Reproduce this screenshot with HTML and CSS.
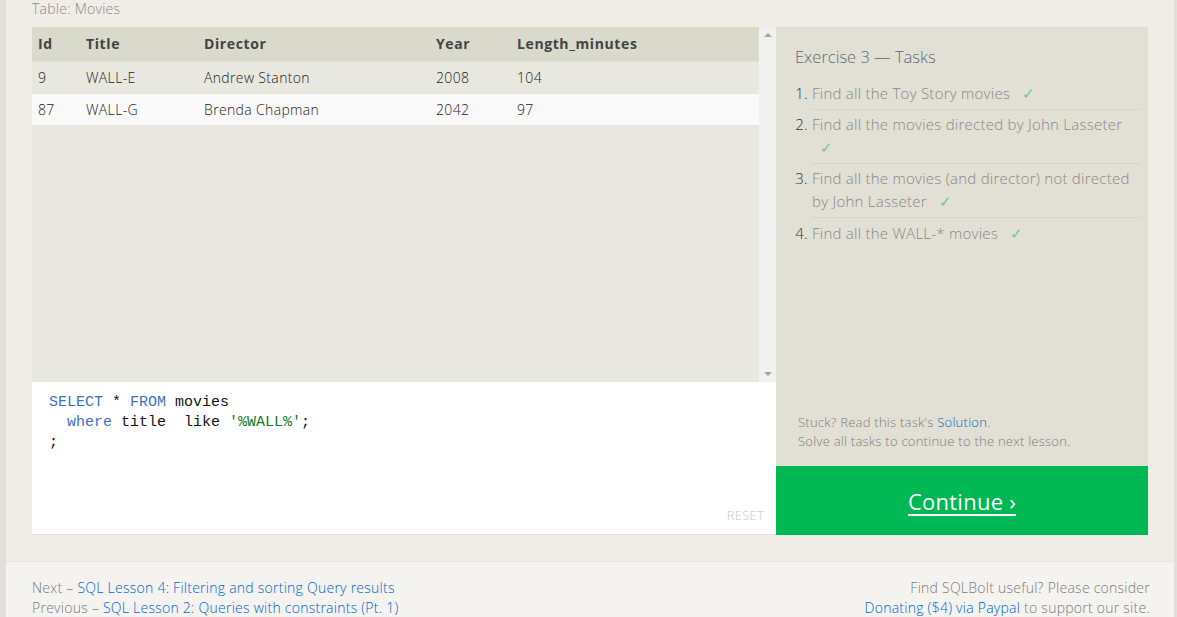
FILE: index.html
```html
<!DOCTYPE html>
<html>
<head>
<meta charset="utf-8">
<link rel="stylesheet" href="styles.css">
</head>
<body>
<div class="page">
  <section class="lesson">
    <div class="table-label">Table: Movies</div>
    <div class="exercise">
      <div class="left">
        <div class="table-box">
          <div class="table-scroll">
            <table class="results">
              <thead>
                <tr><th class="c-id">Id</th><th class="c-title">Title</th><th class="c-dir">Director</th><th class="c-year">Year</th><th>Length_minutes</th></tr>
              </thead>
              <tbody>
                <tr><td>9</td><td>WALL-E</td><td>Andrew Stanton</td><td>2008</td><td>104</td></tr>
                <tr class="alt"><td>87</td><td>WALL-G</td><td>Brenda Chapman</td><td>2042</td><td>97</td></tr>
              </tbody>
            </table>
          </div>
          <div class="scrollbar">
            <span class="arrow up"></span>
            <span class="arrow down"></span>
          </div>
        </div>
        <div class="editor">
          <div class="code">
            <div class="line"><span class="kw">SELECT</span> * <span class="kw">FROM</span> movies</div>
            <div class="line">  <span class="kw">where</span> title  like <span class="str">'%WALL%'</span>;</div>
            <div class="line">;</div>
          </div>
          <div class="reset">RESET</div>
        </div>
      </div>
      <div class="right">
        <div class="tasks">
          <h3 class="tasks-title">Exercise 3 — Tasks</h3>
          <ol class="task-list">
            <li>Find all the Toy Story movies <span class="check">✓</span></li>
            <li>Find all the movies directed by John Lasseter <span class="check">✓</span></li>
            <li>Find all the movies (and director) not directed by John Lasseter <span class="check">✓</span></li>
            <li class="last">Find all the WALL-* movies <span class="check">✓</span></li>
          </ol>
          <div class="stuck">
            <div>Stuck? Read this task's <a href="#">Solution</a>.</div>
            <div>Solve all tasks to continue to the next lesson.</div>
          </div>
        </div>
        <a class="continue" href="#">Continue ›</a>
      </div>
    </div>
  </section>
  <footer class="footer">
    <div class="nav">
      <div>Next – <a href="#">SQL Lesson 4: Filtering and sorting Query results</a></div>
      <div>Previous – <a href="#">SQL Lesson 2: Queries with constraints (Pt. 1)</a></div>
    </div>
    <div class="donate">
      <div>Find SQLBolt useful? Please consider</div>
      <div><a href="#">Donating ($4) via Paypal</a> to support our site.</div>
    </div>
  </footer>
</div>
</body>
</html>
```
FILE: styles.css
```css
* { box-sizing: border-box; }
html, body { margin: 0; padding: 0; }
body {
  background: #e3dfda;
  font-family: "Open Sans", "Noto Sans", sans-serif;
  color: #333;
  height: 617px;
  overflow: hidden;
  letter-spacing: 0.25px;
}
a { color: #0066cc; text-decoration: none; }
.page {
  margin: 0 3px 0 6px;
  background: #f5f3ef;
  height: 617px;
}
.lesson {
  background: #f0ece6;
  padding: 0 26px 26px 26px;
  border-bottom: 1px solid #e9e5de;
}
.table-label {
  font-size: 14px;
  line-height: 18px;
  color: #8a8a8a;
  font-weight: 300;
  height: 27px;
}
.exercise {
  display: flex;
  height: 508px;
}
.left {
  width: 744px;
  display: flex;
  flex-direction: column;
}
.table-box {
  height: 355px;
  display: flex;
  background: #e9e8e0;
}
.table-scroll { flex: 1; }
.results {
  width: 100%;
  border-collapse: collapse;
  font-size: 14px;
  color: #333;
}
.results th {
  background: #d9d9cc;
  text-align: left;
  font-weight: 700;
  color: #444;
  height: 34px;
  padding: 0 0 0 6px;
  letter-spacing: 0.6px;
}
.results td {
  height: 32px;
  padding: 0 0 0 6px;
  border-top: 1px solid #e0e0d8;
  font-weight: 300;
  color: #222;
  letter-spacing: 0.35px;
}
.results tr.alt td { background: #f9f9f9; border-top: 1px solid #e4e4e0; }
.c-id { width: 48px; }
.c-title { width: 118px; }
.c-dir { width: 232px; }
.c-year { width: 81px; }
.scrollbar {
  width: 17px;
  background: #f1f1f1;
  display: flex;
  flex-direction: column;
  justify-content: space-between;
  align-items: center;
  padding: 6px 0 6px;
}
.arrow { width: 0; height: 0; border-left: 4px solid transparent; border-right: 4px solid transparent; }
.arrow.up { border-bottom: 4px solid #a3a3a3; }
.arrow.down { border-top: 4px solid #a3a3a3; }
.editor {
  flex: 1;
  background: #fff;
  border-bottom: 1px solid #e4e2dc;
  position: relative;
  padding: 11px 17px 9px;
}
.code {
  font-family: "Liberation Mono", "DejaVu Sans Mono", monospace;
  font-size: 15px;
  line-height: 20px;
  color: #111;
  letter-spacing: 0;
}
.line { white-space: pre; height: 20px; }
.kw { color: #3a73bd; }
.str { color: #127a2a; }
.reset {
  position: absolute;
  right: 12px;
  bottom: 10px;
  font-size: 13px;
  color: #c8c8c8;
  font-weight: 300;
}
.right {
  width: 372px;
  display: flex;
  flex-direction: column;
}
.tasks {
  flex: 1;
  background: #e2e0d5;
  padding: 18px 7px 15px 19px;
  display: flex;
  flex-direction: column;
}
.tasks-title {
  margin: 0 0 10px 0;
  font-size: 16.5px;
  line-height: 24px;
  font-weight: 300;
  color: #5e6b7c;
  letter-spacing: 0;
}
.task-list {
  margin: 0;
  padding: 0 0 0 17px;
  font-size: 15px;
  line-height: 23px;
  font-weight: 300;
  color: #888;
}
.task-list li {
  padding: 3px 0 4px 0;
  border-bottom: 1px solid #d6d4c8;
}
.task-list li::marker { color: #333; }
.task-list li.last { border-bottom: none; padding-top: 4px; }
.check {
  color: #68cf8a;
  margin-left: 8px;
}
.stuck {
  margin-top: auto;
  padding-left: 3px;
  font-size: 13px;
  line-height: 19px;
  color: #7d7d7d;
  font-weight: 300;
}
.continue {
  height: 69px;
  background: #00b853;
  color: #fff;
  font-size: 22px;
  text-decoration: underline;
  text-underline-offset: 4px;
  text-decoration-thickness: 2px;
  display: flex;
  align-items: center;
  justify-content: center;
}
.footer {
  display: flex;
  justify-content: space-between;
  padding: 16px 24px 0 26px;
  font-size: 14px;
  line-height: 20px;
  color: #7a7a7a;
  font-weight: 300;
}
.donate { text-align: right; }
```
